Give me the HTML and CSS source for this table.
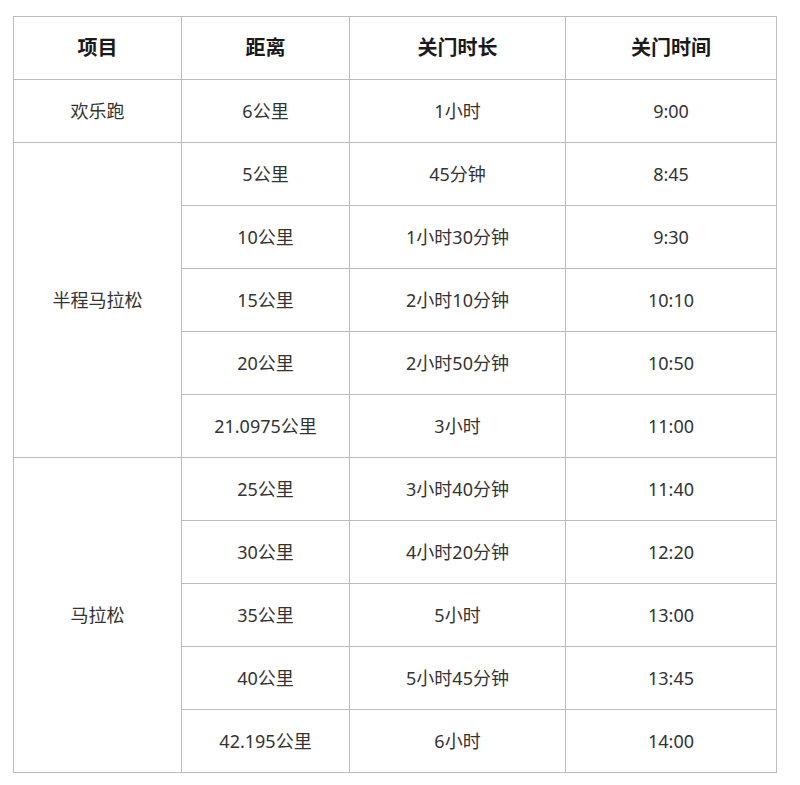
FILE: index.html
```html
<!DOCTYPE html>
<html lang="zh">
<head>
<meta charset="utf-8">
<link rel="stylesheet" href="styles.css">
</head>
<body>
<table class="cutoff">
  <colgroup>
    <col class="c1"><col class="c2"><col class="c3"><col class="c4">
  </colgroup>
  <thead>
    <tr><th>项目</th><th>距离</th><th>关门时长</th><th>关门时间</th></tr>
  </thead>
  <tbody>
    <tr><td>欢乐跑</td><td>6公里</td><td>1小时</td><td>9:00</td></tr>
    <tr><td rowspan="5">半程马拉松</td><td>5公里</td><td>45分钟</td><td>8:45</td></tr>
    <tr><td>10公里</td><td>1小时30分钟</td><td>9:30</td></tr>
    <tr><td>15公里</td><td>2小时10分钟</td><td>10:10</td></tr>
    <tr><td>20公里</td><td>2小时50分钟</td><td>10:50</td></tr>
    <tr><td>21.0975公里</td><td>3小时</td><td>11:00</td></tr>
    <tr><td rowspan="6">马拉松</td><td>25公里</td><td>3小时40分钟</td><td>11:40</td></tr>
    <tr><td>30公里</td><td>4小时20分钟</td><td>12:20</td></tr>
    <tr><td>35公里</td><td>5小时</td><td>13:00</td></tr>
    <tr><td>40公里</td><td>5小时45分钟</td><td>13:45</td></tr>
    <tr><td>42.195公里</td><td>6小时</td><td>14:00</td></tr>
  </tbody>
</table>
</body>
</html>
```
FILE: styles.css
```css
html, body {
  background: #ffffff;
}
body {
  margin: 16px 0 0 13px;
  font-family: "Noto Sans", "Noto Sans CJK SC", sans-serif;
  color: #333333;
}
.cutoff {
  border-collapse: collapse;
  table-layout: fixed;
  width: 763px;
}
.c1 { width: 168px; }
.c2 { width: 168px; }
.c3 { width: 216px; }
.c4 { width: 211px; }
.cutoff th,
.cutoff td {
  border: 1px solid #bcbcbc;
  height: 62px;
  padding: 0;
  text-align: center;
  vertical-align: middle;
  font-size: 18px;
  line-height: 24px;
}
.cutoff th {
  font-size: 20px;
  font-weight: 700;
  color: #1a1a1a;
}
```
